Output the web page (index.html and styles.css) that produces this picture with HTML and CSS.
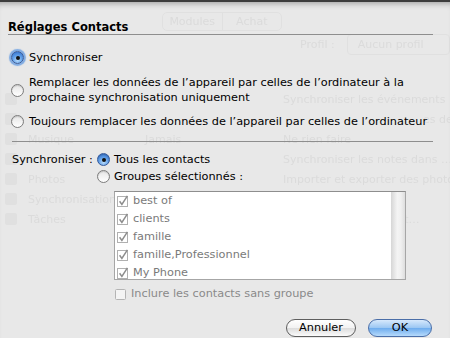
FILE: index.html
```html
<!DOCTYPE html>
<html lang="fr">
<head>
    <meta charset="UTF-8">
    <meta name="viewport" content="width=device-width, initial-scale=1.0">
    <title>Réglages Contacts</title>
    <link rel="stylesheet" href="styles.css">
</head>
<body>
    <div class="window">
        <!-- fenêtre iSync derrière la feuille -->
        <div class="bg">
            <div class="bg-tabs">
                <span class="bg-tab">Modules</span>
                <span class="bg-tab">Achat</span>
            </div>
            <div class="bg-profile">
                <span>Profil :</span>
                <span class="bg-popup">Aucun profil</span>
            </div>
            <div class="bg-rows">
                <div class="bg-row"><i></i><span></span><span></span><span>Synchroniser les événements</span></div>
                <div class="bg-row"><i></i><span></span><span></span><span class="far">es de t…</span></div>
                <div class="bg-row"><i></i><span>Musique</span><span>Jamais</span><span>Ne rien faire</span></div>
                <div class="bg-row"><i></i><span></span><span></span><span>Synchroniser les notes dans …</span></div>
                <div class="bg-row"><i></i><span>Photos</span><span></span><span>Importer et exporter des photos</span></div>
                <div class="bg-row"><i></i><span>Synchronisation</span><span></span><span></span></div>
                <div class="bg-row"><i></i><span>Tâches</span><span></span><span class="near">es de t…</span></div>
            </div>
        </div>

        <div class="sheet">
            <h2 class="title">Réglages Contacts</h2>

            <div class="options">
                <label class="option">
                    <span class="radio on focus"></span>
                    <span>Synchroniser</span>
                </label>
                <label class="option two">
                    <span class="radio"></span>
                    <span>Remplacer les données de l’appareil par celles de l’ordinateur à la<br>prochaine synchronisation uniquement</span>
                </label>
                <label class="option three">
                    <span class="radio"></span>
                    <span>Toujours remplacer les données de l’appareil par celles de l’ordinateur</span>
                </label>
            </div>

            <div class="sync">
                <div class="sync-label">Synchroniser :</div>
                <div class="sync-choices">
                    <label class="option">
                        <span class="radio on"></span>
                        <span>Tous les contacts</span>
                    </label>
                    <label class="option">
                        <span class="radio"></span>
                        <span>Groupes sélectionnés :</span>
                    </label>

                    <div class="groups">
                        <ul class="group-list">
                            <li><span class="check"><svg width="12" height="12" viewBox="0 0 12 12"><rect x="0.5" y="1.5" width="10" height="10" fill="#fff" stroke="#b0b0b0"/><path d="M2.6 6.2 L4.9 9.4 L10.4 0.8" fill="none" stroke="#8d8d8d" stroke-width="1.5"/></svg></span>best of</li>
                            <li><span class="check"><svg width="12" height="12" viewBox="0 0 12 12"><rect x="0.5" y="1.5" width="10" height="10" fill="#fff" stroke="#b0b0b0"/><path d="M2.6 6.2 L4.9 9.4 L10.4 0.8" fill="none" stroke="#8d8d8d" stroke-width="1.5"/></svg></span>clients</li>
                            <li><span class="check"><svg width="12" height="12" viewBox="0 0 12 12"><rect x="0.5" y="1.5" width="10" height="10" fill="#fff" stroke="#b0b0b0"/><path d="M2.6 6.2 L4.9 9.4 L10.4 0.8" fill="none" stroke="#8d8d8d" stroke-width="1.5"/></svg></span>famille</li>
                            <li><span class="check"><svg width="12" height="12" viewBox="0 0 12 12"><rect x="0.5" y="1.5" width="10" height="10" fill="#fff" stroke="#b0b0b0"/><path d="M2.6 6.2 L4.9 9.4 L10.4 0.8" fill="none" stroke="#8d8d8d" stroke-width="1.5"/></svg></span>famille,Professionnel</li>
                            <li><span class="check"><svg width="12" height="12" viewBox="0 0 12 12"><rect x="0.5" y="1.5" width="10" height="10" fill="#fff" stroke="#b0b0b0"/><path d="M2.6 6.2 L4.9 9.4 L10.4 0.8" fill="none" stroke="#8d8d8d" stroke-width="1.5"/></svg></span>My Phone</li>
                        </ul>
                        <div class="scroll"></div>
                    </div>

                    <label class="include">
                        <span class="check"><svg width="12" height="12" viewBox="0 0 12 12"><rect x="0.5" y="1.5" width="10" height="10" rx="1" fill="#f4f4f4" stroke="#b4b4b4"/></svg></span>
                        Inclure les contacts sans groupe
                    </label>
                </div>
            </div>

            <div class="buttons">
                <button class="btn">Annuler</button>
                <button class="btn ok">OK</button>
            </div>
        </div>
    </div>
</body>
</html>
```

FILE: styles.css
```css
body {
    margin: 0;
    font-family: "DejaVu Sans", Verdana, sans-serif;
    font-size: 11.3px;
    color: #000;
    background: #e8e8e8;
}
.window {
    position: relative;
    width: 450px;
    height: 338px;
    overflow: hidden;
    background: #e8e8e8;
}

/* fond estompé */
.bg {
    color: #dbdbdb;
    filter: blur(0.7px);
    font-size: 11px;
    white-space: nowrap;
}
.bg-tabs {
    display: flex;
    margin: 12px 0 0 162px;
    width: 118px;
    height: 17px;
    border: 1px solid #e0e0e0;
    border-radius: 5px;
}
.bg-tab {
    flex: 1;
    text-align: center;
    line-height: 17px;
}
.bg-tab + .bg-tab {
    border-left: 1px solid #e0e0e0;
}
.bg-profile {
    display: flex;
    align-items: center;
    gap: 12px;
    margin: 3px 0 0 300px;
}
.bg-popup {
    width: 96px;
    height: 19px;
    line-height: 19px;
    padding-left: 10px;
    border: 1px solid #e0e0e0;
    border-radius: 4px;
}
.bg-rows {
    margin-top: 34px;
}
.bg-row {
    display: grid;
    grid-template-columns: 23px 117px 138px auto;
    height: 20px;
    align-items: center;
    padding-left: 5px;
}
.bg-row i {
    width: 12px;
    height: 12px;
    background: #e0e0e0;
    border-radius: 2px;
}
.bg-row .far {
    padding-left: 140px;
}
.bg-row .near {
    padding-left: 88px;
}

/* feuille */
.sheet {
    position: absolute;
    inset: 0;
    padding: 0 17px 0 8px;
    border-top: 2px solid #3d3d3d;
    box-shadow: inset 0 6px 6px -5px rgba(0, 0, 0, 0.35);
    white-space: nowrap;
}
.title {
    margin: 18px 0 0;
    font-size: 11.5px;
    font-weight: bold;
    line-height: 14px;
    border-bottom: 1px solid #8e8e8e;
}
.options {
    padding-left: 3px;
}
.option {
    display: flex;
    align-items: center;
    gap: 5px;
    line-height: 15px;
}
.options .option:first-child {
    margin-top: 15px;
}
.option.two {
    margin-top: 10px;
}
.option.three {
    margin-top: 9px;
}
.radio {
    flex: none;
    position: relative;
    width: 11px;
    height: 11px;
    border-radius: 50%;
    border: 1px solid #7c7c7c;
    background: linear-gradient(#e6e6e6, #fefefe);
    box-shadow: inset 0 1px 1px rgba(0, 0, 0, 0.15);
}
.radio.on {
    border-color: #34599a;
    background: radial-gradient(circle at 50% 75%, #b8dcfb 0, #5d9ce6 50%, #2d68c4 100%);
}
.radio.on::after {
    content: "";
    position: absolute;
    left: 3.5px;
    top: 3.5px;
    width: 4px;
    height: 4px;
    border-radius: 50%;
    background: #111;
}
.radio.focus {
    box-shadow: 0 0 1px 2px rgba(90, 150, 225, 0.75);
}

.sync {
    display: flex;
    margin: 12px 0 0 4px;
    padding-top: 9px;
    border-top: 1px solid #8e8e8e;
}
.sync-label {
    width: 85px;
    line-height: 17px;
}
.sync-choices {
    flex: 1;
}
.sync-choices .option {
    line-height: 17px;
    gap: 4px;
}
.groups {
    display: flex;
    width: 290px;
    height: 87px;
    margin: 6px 0 0 17px;
    border: 1px solid #a6a6a6;
    border-top-color: #8e8e8e;
    background: #fff;
}
.group-list {
    flex: 1;
    list-style: none;
    margin: 0;
    padding: 0 0 0 2px;
    color: #7a7a7a;
}
.group-list li {
    display: flex;
    align-items: center;
    gap: 4px;
    height: 17.9px;
}
.check {
    display: flex;
}
.scroll {
    width: 14px;
    background: linear-gradient(90deg, #d6d6d6, #f4f4f4 45%, #f0f0f0 70%, #dedede);
}
.include {
    display: flex;
    align-items: center;
    gap: 4px;
    margin: 7px 0 0 18px;
    color: #8a8a8a;
}

.buttons {
    display: flex;
    justify-content: flex-end;
    gap: 12px;
    margin-top: 19px;
    padding-right: 1px;
}
.btn {
    height: 18px;
    padding: 0;
    font-family: inherit;
    font-size: 11.3px;
    line-height: 16px;
    color: #000;
    border: 1px solid #5e5e5e;
    border-radius: 9px;
    background: linear-gradient(#ffffff, #f2f2f2 50%, #dcdcdc 51%, #fbfbfb);
    width: 70px;
}
.btn.ok {
    width: 64px;
    border-color: #4a6ea8;
    background: linear-gradient(#d7e9fc, #9cc7f3 48%, #6fadee 52%, #b6dafb);
}
```
